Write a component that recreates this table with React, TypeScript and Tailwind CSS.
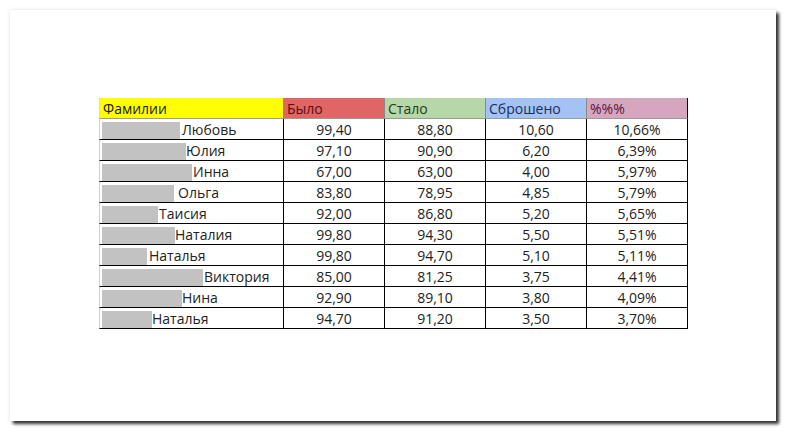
const rows = [
  { bar: 78, gap: 2, name: "Любовь", was: "99,40", now: "88,80", lost: "10,60", pct: "10,66%" },
  { bar: 84, gap: 0, name: "Юлия", was: "97,10", now: "90,90", lost: "6,20", pct: "6,39%" },
  { bar: 90, gap: 1, name: "Инна", was: "67,00", now: "63,00", lost: "4,00", pct: "5,97%" },
  { bar: 72, gap: 4, name: "Ольга", was: "83,80", now: "78,95", lost: "4,85", pct: "5,79%" },
  { bar: 56, gap: 1, name: "Таисия", was: "92,00", now: "86,80", lost: "5,20", pct: "5,65%" },
  { bar: 73, gap: 0, name: "Наталия", was: "99,80", now: "94,30", lost: "5,50", pct: "5,51%" },
  { bar: 45, gap: 2, name: "Наталья", was: "99,80", now: "94,70", lost: "5,10", pct: "5,11%" },
  { bar: 101, gap: 1, name: "Виктория", was: "85,00", now: "81,25", lost: "3,75", pct: "4,41%" },
  { bar: 80, gap: 0, name: "Нина", was: "92,90", now: "89,10", lost: "3,80", pct: "4,09%" },
  { bar: 50, gap: 0, name: "Наталья", was: "94,70", now: "91,20", lost: "3,50", pct: "3,70%" },
];

const headers = [
  { label: "Фамилии", cls: "w-[185px] bg-[#ffff00] text-[#1a1a00] border-l border-l-[#d8d8d8]" },
  { label: "Было", cls: "w-[101px] bg-[#e06666] text-[#5a0d0d]" },
  { label: "Стало", cls: "w-[101px] bg-[#b6d7a8] text-[#1f3b1a]" },
  { label: "Сброшено", cls: "w-[101px] bg-[#a4c2f4] text-[#1a2f5e]" },
  { label: "%%%", cls: "w-[101px] bg-[#d5a6bd] text-[#55153d] border-r-black" },
];

export default function App() {
  return (
    <div className="w-[787px] h-[432px] bg-white pl-[10px] pt-[10px] font-['Open_Sans','DejaVu_Sans',sans-serif]">
      <div className="w-[766px] h-[411px] bg-white shadow-[3px_3px_3px_rgba(0,0,0,0.8),0_0_4px_rgba(0,0,0,0.12)] pl-[89px] pt-[88px]">
        <div className="w-[589px] text-[14px] leading-none text-[#222]">
          <div className="flex h-[21px]">
            {headers.map((h) => (
              <div
                key={h.label}
                className={`flex items-center pl-[3px] pt-[1px] border-r border-b border-r-[#8a8a8a] border-b-[#9a9a9a] ${h.cls}`}
              >
                {h.label}
              </div>
            ))}
          </div>
          {rows.map((r, i) => (
            <div key={i} className="flex h-[21px]">
              <div className="w-[185px] flex items-end border-l border-l-[#d0d0d0] border-r border-r-black border-b border-b-black pl-[2px]">
                <div className="h-[17px] bg-[#c2c2c2] blur-[0.4px] shrink-0" style={{ width: r.bar }} />
                <span className="self-center pt-[1px]" style={{ marginLeft: r.gap }}>
                  {r.name}
                </span>
              </div>
              {[r.was, r.now, r.lost, r.pct].map((v, j) => (
                <div
                  key={j}
                  className="w-[101px] flex items-center justify-center pt-[1px] border-r border-r-black border-b border-b-black"
                >
                  {v}
                </div>
              ))}
            </div>
          ))}
        </div>
      </div>
    </div>
  );
}
